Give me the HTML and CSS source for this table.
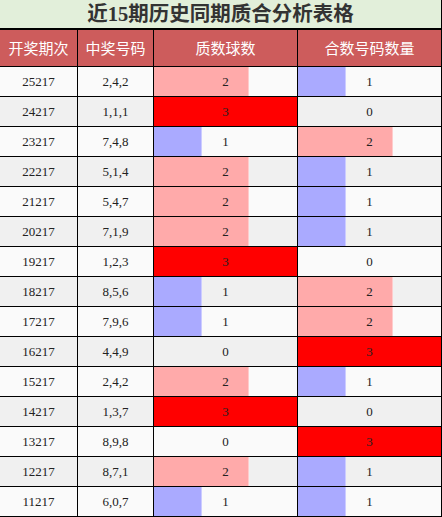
FILE: index.html
```html
<!DOCTYPE html>
<html lang="zh">
<head>
<meta charset="utf-8">
<title>近15期历史同期质合分析表格</title>
<link rel="stylesheet" href="styles.css">
</head>
<body>
<div class="board">
  <div class="title">近15期历史同期质合分析表格</div>
  <div class="row head">
    <div class="cell">开奖期次</div>
    <div class="cell">中奖号码</div>
    <div class="cell">质数球数</div>
    <div class="cell">合数号码数量</div>
  </div>
  <div class="row odd"><div class="cell">25217</div><div class="cell">2,4,2</div><div class="cell bar b2">2</div><div class="cell bar b1">1</div></div>
  <div class="row even"><div class="cell">24217</div><div class="cell">1,1,1</div><div class="cell bar b3">3</div><div class="cell bar b0">0</div></div>
  <div class="row odd"><div class="cell">23217</div><div class="cell">7,4,8</div><div class="cell bar b1">1</div><div class="cell bar b2">2</div></div>
  <div class="row even"><div class="cell">22217</div><div class="cell">5,1,4</div><div class="cell bar b2">2</div><div class="cell bar b1">1</div></div>
  <div class="row odd"><div class="cell">21217</div><div class="cell">5,4,7</div><div class="cell bar b2">2</div><div class="cell bar b1">1</div></div>
  <div class="row even"><div class="cell">20217</div><div class="cell">7,1,9</div><div class="cell bar b2">2</div><div class="cell bar b1">1</div></div>
  <div class="row odd"><div class="cell">19217</div><div class="cell">1,2,3</div><div class="cell bar b3">3</div><div class="cell bar b0">0</div></div>
  <div class="row even"><div class="cell">18217</div><div class="cell">8,5,6</div><div class="cell bar b1">1</div><div class="cell bar b2">2</div></div>
  <div class="row odd"><div class="cell">17217</div><div class="cell">7,9,6</div><div class="cell bar b1">1</div><div class="cell bar b2">2</div></div>
  <div class="row even"><div class="cell">16217</div><div class="cell">4,4,9</div><div class="cell bar b0">0</div><div class="cell bar b3">3</div></div>
  <div class="row odd"><div class="cell">15217</div><div class="cell">2,4,2</div><div class="cell bar b2">2</div><div class="cell bar b1">1</div></div>
  <div class="row even"><div class="cell">14217</div><div class="cell">1,3,7</div><div class="cell bar b3">3</div><div class="cell bar b0">0</div></div>
  <div class="row odd"><div class="cell">13217</div><div class="cell">8,9,8</div><div class="cell bar b0">0</div><div class="cell bar b3">3</div></div>
  <div class="row even"><div class="cell">12217</div><div class="cell">8,7,1</div><div class="cell bar b2">2</div><div class="cell bar b1">1</div></div>
  <div class="row odd"><div class="cell">11217</div><div class="cell">6,0,7</div><div class="cell bar b1">1</div><div class="cell bar b1">1</div></div>
</div>
</body>
</html>
```
FILE: styles.css
```css
* { box-sizing: border-box; }
html, body { margin: 0; padding: 0; background: #ffffff; }
.board {
  width: 442px;
  font-family: "Liberation Serif", "Noto Sans CJK SC", serif;
  color: #222;
}
.title {
  height: 30px;
  background: #e2efda;
  border-bottom: 2px solid #000;
  border-right: 1px solid #000;
  text-align: center;
  font-size: 20.5px;
  font-weight: bold;
  line-height: 28px;
  color: #333;
}
.row {
  display: grid;
  grid-template-columns: 78px 76px 144px 144px;
  height: 30px;
}
.cell {
  border-right: 1px solid #000;
  border-bottom: 1px solid #000;
  display: flex;
  align-items: center;
  justify-content: center;
  font-size: 13px;
}
.head { height: 37px; background: #cd5c5c; }
.head .cell {
  color: #fff;
  font-family: "Noto Sans CJK SC", sans-serif;
  font-size: 15px;
  padding-bottom: 1px;
}
.odd { background: #fafafa; }
.even { background: #f0f0f0; }
.b1 { background: linear-gradient(90deg, #aaaaff 0 47px, #ccccff 47px 48px, transparent 48px); }
.b2 { background: linear-gradient(90deg, #ffaaaa 0 94px, #ffcccc 94px 95px, transparent 95px); }
.b3 { background: #ff0000; }
.b0 { background: transparent; }
```
